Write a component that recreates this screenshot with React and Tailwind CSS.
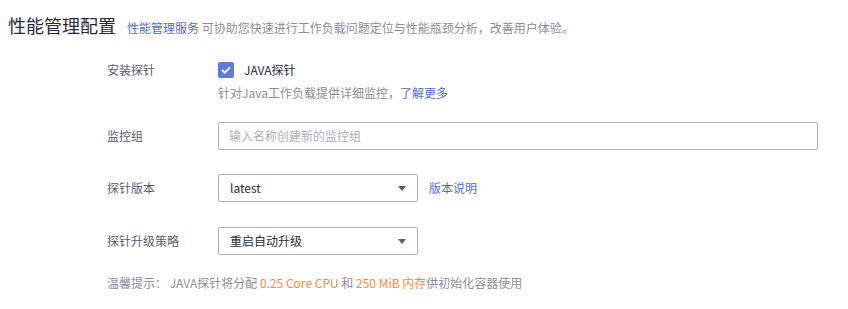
const font = { fontFamily: '"Noto Sans CJK SC", "Noto Sans", sans-serif' };

function Caret() {
  return (
    <svg width="8" height="5" viewBox="0 0 8 5" className="shrink-0">
      <path d="M0 0h8L4 5z" fill="#575d6c" />
    </svg>
  );
}

function Select({ value }) {
  return (
    <div className="w-[200px] h-[28px] border border-[#adb0b8] rounded-[2px] bg-white flex items-center justify-between pl-[11px] pr-[11px] text-[12px] text-[#252b3a]">
      <span>{value}</span>
      <Caret />
    </div>
  );
}

function Row({ label, children, className = "" }) {
  return (
    <div className={"flex " + className}>
      <div className="w-[111px] shrink-0 text-[12px] text-[#575d6c] leading-[28px]">{label}</div>
      <div className="flex-1">{children}</div>
    </div>
  );
}

export default function App() {
  return (
    <div className="w-[848px] h-[309px] bg-white overflow-hidden" style={font}>
      <div className="flex items-baseline pl-[8px] pt-[11px]">
        <h1 className="text-[18px] leading-[28px] text-[#252b3a]">性能管理配置</h1>
        <p className="ml-[11px] text-[12px] text-[#8a8e99]">
          <span className="text-[#526ecc]">性能管理服务</span> 可协助您快速进行工作负载问题定位与性能瓶颈分析，改善用户体验。
        </p>
      </div>

      <div className="pl-[107px] pr-[30px] mt-[17px]">
        <Row label="安装探针" className="items-start">
          <div className="flex items-center h-[28px]">
            <span className="w-[16px] h-[16px] rounded-[2px] bg-[#5e7ce0] flex items-center justify-center">
              <svg width="10" height="8" viewBox="0 0 10 8">
                <path d="M1 4l2.7 2.7L9 1.3" fill="none" stroke="white" strokeWidth="1.8" />
              </svg>
            </span>
            <span className="ml-[10px] text-[12px] text-[#252b3a]">JAVA探针</span>
          </div>
          <div className="text-[12px] text-[#8a8e99] leading-[18px] mt-0">
            针对Java工作负载提供详细监控，<span className="text-[#526ecc]">了解更多</span>
          </div>
        </Row>

        <Row label="监控组" className="mt-[20px]">
          <div className="w-[600px] h-[28px] border border-[#adb0b8] rounded-[2px] flex items-center pl-[10px] text-[12px] text-[#adb0b8]">
            输入名称创建新的监控组
          </div>
        </Row>

        <Row label="探针版本" className="mt-[24px]">
          <div className="flex items-center gap-[11px]">
            <Select value="latest" />
            <span className="text-[12px] text-[#526ecc]">版本说明</span>
          </div>
        </Row>

        <Row label="探针升级策略" className="mt-[25px]">
          <Select value="重启自动升级" />
        </Row>

        <div className="mt-[19px] text-[12px] text-[#8a8e99] leading-[18px]">
          温馨提示： JAVA探针将分配 <span className="text-[#fa8c3d]">0.25 Core CPU</span> 和 <span className="text-[#fa8c3d]">250 MiB 内存</span>供初始化容器使用
        </div>
      </div>
    </div>
  );
}
